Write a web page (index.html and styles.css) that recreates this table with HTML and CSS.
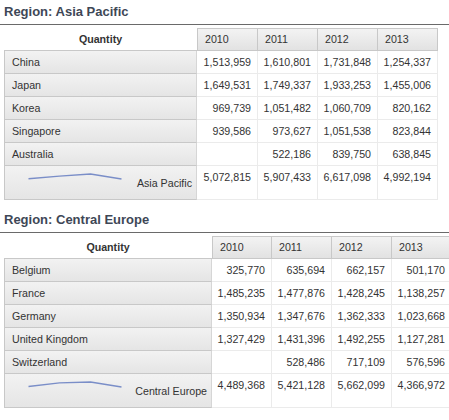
FILE: index.html
```html
<!DOCTYPE html>
<html>
<head>
<meta charset="utf-8">
<link rel="stylesheet" href="styles.css">
</head>
<body>
<section class="region">
  <h2 class="title">Region: Asia Pacific</h2>
  <table class="grid grid-ap">
    <colgroup><col class="c-lbl"><col class="c-y1"><col class="c-y"><col class="c-y"><col class="c-y"></colgroup>
    <thead>
      <tr class="hrow"><th class="q">Quantity</th><th class="y first">2010</th><th class="y">2011</th><th class="y">2012</th><th class="y">2013</th></tr>
    </thead>
    <tbody>
      <tr><td class="lbl">China</td><td class="num">1,513,959</td><td class="num">1,610,801</td><td class="num">1,731,848</td><td class="num">1,254,337</td></tr>
      <tr><td class="lbl">Japan</td><td class="num">1,649,531</td><td class="num">1,749,337</td><td class="num">1,933,253</td><td class="num">1,455,006</td></tr>
      <tr><td class="lbl">Korea</td><td class="num">969,739</td><td class="num">1,051,482</td><td class="num">1,060,709</td><td class="num">820,162</td></tr>
      <tr><td class="lbl">Singapore</td><td class="num">939,586</td><td class="num">973,627</td><td class="num">1,051,538</td><td class="num">823,844</td></tr>
      <tr><td class="lbl">Australia</td><td class="num"></td><td class="num">522,186</td><td class="num">839,750</td><td class="num">638,845</td></tr>
      <tr class="trow">
        <td class="lbl tot"><div class="tot-in"><svg class="spark" width="96" height="8" viewBox="0 0 96 8"><polyline points="0.5,5.75 31.5,3.2 62.5,1 93.5,6" fill="none" stroke="#7a8ec8" stroke-width="1.3"/></svg><span class="tot-name">Asia Pacific</span></div></td>
        <td class="num top">5,072,815</td><td class="num top">5,907,433</td><td class="num top">6,617,098</td><td class="num top">4,992,194</td>
      </tr>
    </tbody>
  </table>
</section>
<section class="region">
  <h2 class="title">Region: Central Europe</h2>
  <table class="grid grid-ce">
    <colgroup><col class="c-lbl2"><col class="c-y"><col class="c-y"><col class="c-y"><col class="c-y"></colgroup>
    <thead>
      <tr class="hrow"><th class="q">Quantity</th><th class="y first">2010</th><th class="y">2011</th><th class="y">2012</th><th class="y">2013</th></tr>
    </thead>
    <tbody>
      <tr><td class="lbl">Belgium</td><td class="num">325,770</td><td class="num">635,694</td><td class="num">662,157</td><td class="num">501,170</td></tr>
      <tr><td class="lbl">France</td><td class="num">1,485,235</td><td class="num">1,477,876</td><td class="num">1,428,245</td><td class="num">1,138,257</td></tr>
      <tr><td class="lbl">Germany</td><td class="num">1,350,934</td><td class="num">1,347,676</td><td class="num">1,362,333</td><td class="num">1,023,668</td></tr>
      <tr><td class="lbl">United Kingdom</td><td class="num">1,327,429</td><td class="num">1,431,396</td><td class="num">1,492,255</td><td class="num">1,127,281</td></tr>
      <tr><td class="lbl">Switzerland</td><td class="num"></td><td class="num">528,486</td><td class="num">717,109</td><td class="num">576,596</td></tr>
      <tr class="trow">
        <td class="lbl tot"><div class="tot-in"><svg class="spark" width="96" height="8" viewBox="0 0 96 8"><polyline points="0.5,5.5 31.5,1.9 62.5,1 93.5,6" fill="none" stroke="#7a8ec8" stroke-width="1.3"/></svg><span class="tot-name">Central Europe</span></div></td>
        <td class="num top">4,489,368</td><td class="num top">5,421,128</td><td class="num top">5,662,099</td><td class="num top">4,366,972</td>
      </tr>
    </tbody>
  </table>
</section>
</body>
</html>
```
FILE: styles.css
```css
html, body {
  margin: 0;
  padding: 0;
  overflow: hidden;
  background: #ffffff;
}
body {
  font-family: "Liberation Sans", Arial, sans-serif;
  font-size: 10.67px;
  color: #333333;
}
.region {
  padding-bottom: 8px;
}
.title {
  margin: 0;
  height: 24px;
  line-height: 24px;
  padding-left: 4px;
  font-size: 13px;
  font-weight: bold;
  color: #3e4756;
  border-bottom: 1px solid #6a6a6a;
}
.grid {
  margin: 3px 0 0 4px;
  border-collapse: separate;
  border-spacing: 0;
  table-layout: fixed;
}
.grid-ap { width: 434px; }
.grid-ce { width: 448px; }
.c-lbl { width: 193px; }
.c-lbl2 { width: 208px; }
.c-y1 { width: 61px; }
.c-y { width: 60px; }
.hrow, .grid tbody tr { height: 23px; }
.grid tbody tr.trow { height: 34px; }
th, td {
  padding: 0;
  line-height: 13px;
  white-space: nowrap;
  overflow: hidden;
}
.q {
  font-weight: bold;
  text-align: center;
  border-bottom: 1px solid #c8c8c8;
  color: #333333;
}
.y {
  font-weight: normal;
  text-align: left;
  padding-left: 7px;
  background: linear-gradient(#f3f3f3, #e2e2e2);
  border-top: 1px solid #c8c8c8;
  border-right: 1px solid #c8c8c8;
  border-bottom: 1px solid #c8c8c8;
}
.y.first { border-left: 1px solid #c8c8c8; }
.lbl {
  padding-left: 7px;
  background: linear-gradient(#f2f2f2, #e5e5e5);
  border-left: 1px solid #c8c8c8;
  border-bottom: 1px solid #c8c8c8;
  border-right: 1px solid #d6d6d6;
}
.num {
  text-align: right;
  padding-right: 6px;
  border-right: 1px solid #ebebeb;
  border-bottom: 1px solid #ebebeb;
}
.num.top {
  vertical-align: top;
  padding-top: 5px;
}
.lbl.tot {
  padding: 0;
  vertical-align: top;
}
.tot-in {
  display: flex;
  align-items: center;
  justify-content: space-between;
  height: 33px;
  padding: 0 4px 0 23px;
}
.spark {
  align-self: flex-start;
  margin-top: 7px;
  flex: none;
}
.tot-name {
  margin-top: 1px;
}
```
